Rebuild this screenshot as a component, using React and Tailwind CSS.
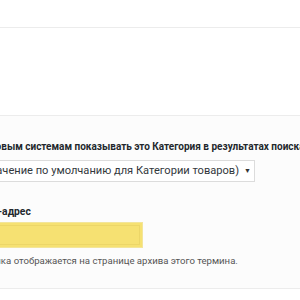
export default function App() {
  const font = { fontFamily: 'Roboto, "Noto Sans", sans-serif' };
  return (
    <div className="w-[300px] h-[300px] overflow-hidden bg-white relative" style={font}>
      <div className="h-[28px] border-b border-[#ececec]" />
      <div className="h-[88px] border-b border-[#ececec]" />
      <div className="h-[173px] bg-[#fcfcfc] border-b border-[#ececec] pt-[23px]">
        <div className="ml-[-87px] text-[10px] font-bold text-[#23282d] leading-[16px] whitespace-nowrap">
          Разрешить поисковым системам показывать это Категория в результатах поиска?
        </div>
        <div className="mt-[5px] ml-[-120px] w-[375px] h-[22px] border border-[#dcdcdc] bg-white flex items-center justify-end pr-[3px] text-[11.1px] text-[#32373c] whitespace-nowrap overflow-hidden">
          <span>Да (значение по умолчанию для Категории товаров)</span>
          <span className="ml-[5px] text-[7px] text-[#333]">▼</span>
        </div>
        <div className="mt-[22px] ml-[-93px] text-[10.3px] font-bold text-[#23282d] leading-[16px] whitespace-nowrap">
          Канонический URL-адрес
        </div>
        <div className="mt-[2px] ml-[-82px] w-[225px] h-[26px] bg-[#f6e172] border border-[#f3e59a] p-[2px]">
          <div className="w-full h-full border border-[#ecd668]" />
        </div>
        <div className="mt-[6px] ml-[-89px] text-[9.6px] text-[#555] leading-[14px] whitespace-nowrap">
          Каноническая ссылка отображается на странице архива этого термина.
        </div>
      </div>
    </div>
  );
}
